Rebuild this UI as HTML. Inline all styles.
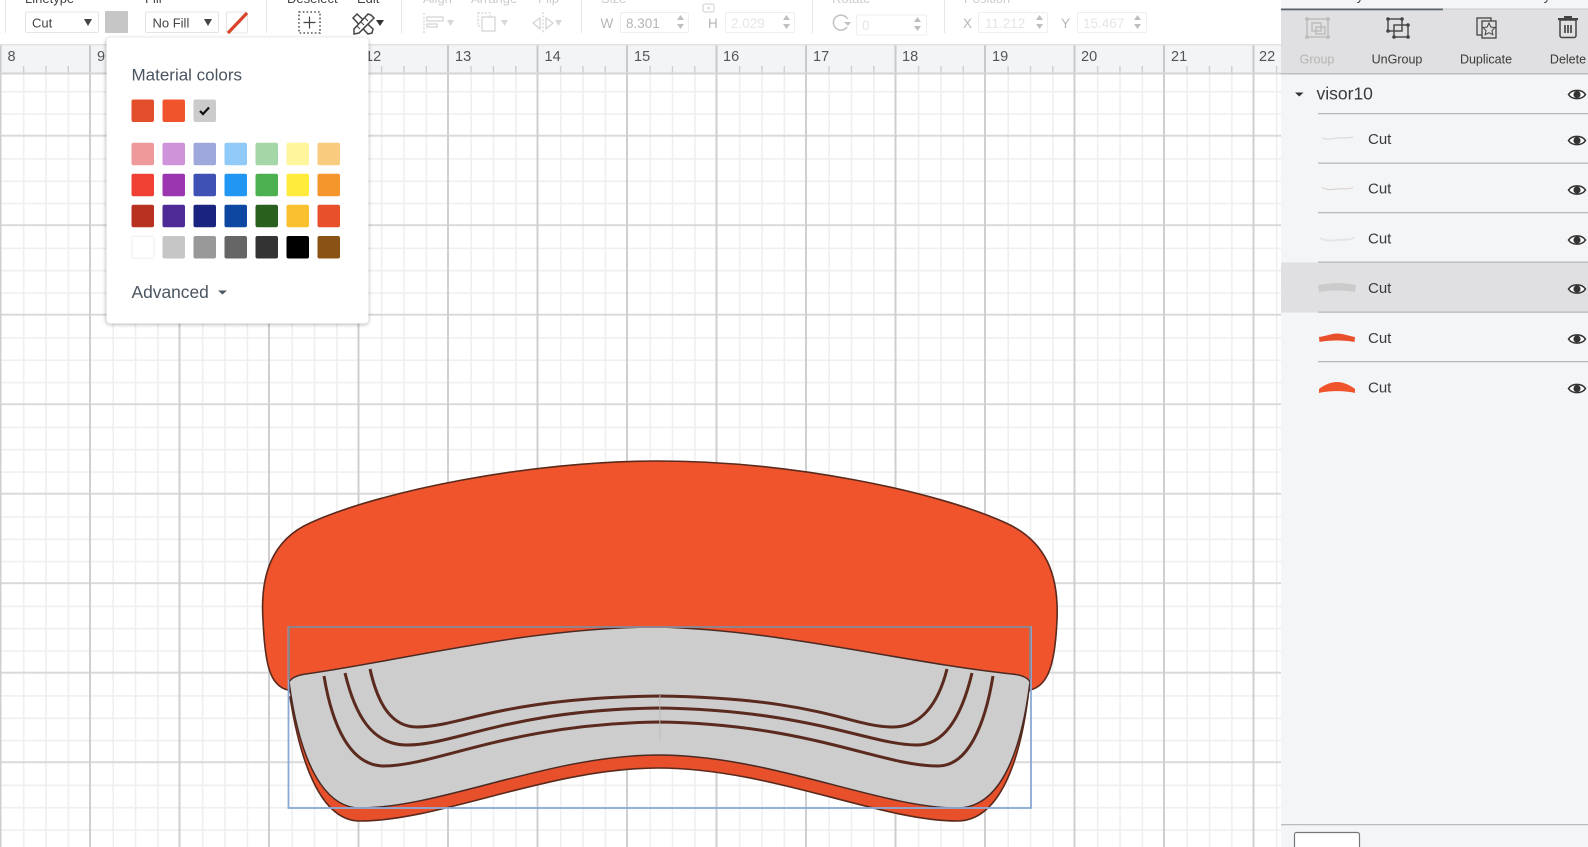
<!DOCTYPE html>
<html><head><meta charset="utf-8"><style>
html,body{margin:0;padding:0;background:#fff;width:1588px;height:847px;overflow:hidden}
svg{display:block;font-family:"Liberation Sans",sans-serif}
</style></head><body>
<svg width="1588" height="847" viewBox="0 0 1588 847" xmlns="http://www.w3.org/2000/svg">
<defs>
<pattern id="g" patternUnits="userSpaceOnUse" x="-0.5" y="45.2" width="89.5" height="89.5">
<rect x="23.4" y="0" width="1.6" height="89.5" fill="#efefef"/><rect x="45.75" y="0" width="1.6" height="89.5" fill="#efefef"/><rect x="68.1" y="0" width="1.6" height="89.5" fill="#efefef"/>
<rect x="0" y="23.4" width="89.5" height="1.6" fill="#efefef"/><rect x="0" y="45.75" width="89.5" height="1.6" fill="#efefef"/><rect x="0" y="68.1" width="89.5" height="1.6" fill="#efefef"/>
<rect x="0" y="0" width="89.5" height="2" fill="#dadada"/>
<rect x="0" y="0" width="2" height="89.5" fill="#cfcfcf"/>
</pattern>
<pattern id="t" patternUnits="userSpaceOnUse" x="-0.5" y="44" width="89.5" height="30">
<rect x="23.4" y="22" width="1.4" height="8" fill="#cfcfcf"/><rect x="45.75" y="22" width="1.4" height="8" fill="#cfcfcf"/><rect x="68.1" y="22" width="1.4" height="8" fill="#cfcfcf"/>
<rect x="0" y="0" width="2" height="30" fill="#c9c9c9"/>
</pattern>
<g id="eye"><path d="M-8.5 0C-5 -5.5 5 -5.5 8.5 0C5 5.5 -5 5.5 -8.5 0Z" fill="#fff" stroke="#333" stroke-width="1.6"/><circle r="3.6" fill="#333"/></g>
</defs>

<!-- canvas grid -->
<rect x="0" y="73" width="1282" height="774" fill="url(#g)"/>
<!-- ruler -->
<rect x="0" y="44" width="1282" height="30" fill="#f3f4f6"/>
<rect x="0" y="44" width="1282" height="30" fill="url(#t)"/>
<rect x="0" y="44" width="1282" height="1.5" fill="#e2e2e4"/>
<rect x="0" y="72.5" width="1282" height="2" fill="#d5d5d7"/>
<g font-size="14.5" fill="#555">
<text x="7.5" y="61">8</text><text x="97" y="61">9</text><text x="365" y="61">12</text><text x="455" y="61">13</text><text x="544.500" y="61">14</text><text x="634" y="61">15</text><text x="723" y="61">16</text><text x="813" y="61">17</text><text x="902" y="61">18</text><text x="992" y="61">19</text><text x="1081" y="61">20</text><text x="1171" y="61">21</text><text x="1259" y="61">22</text>
</g>

<!-- visor -->
<path d="M288 690C270 686 265 665 263 620C260 575 272 540 310 523C380 491 530 461 658 461C790 461 936 491 1006 523C1046 541 1059 575 1057 620C1055 665 1048 686 1030 690L1000 720L320 720Z" fill="#f0542d" stroke="#5a2a1c" stroke-width="1.6"/>
<path d="M290 697C300 760 320 821 360 821C440 821 550 768 658 768C770 768 880 821 957 821C1000 821 1020 760 1028 697Z" fill="#e8502c" stroke="#5a2a1c" stroke-width="1.6"/>
<path d="M289 682C292 677 298 675 306 674C400 661 530 627 658 627C780 630 900 662 1012 674C1022 675 1028 678 1030 682C1017 785 985 808 957 808C880 808 770 755 658 755C550 755 440 808 360 808C335 808 303 785 289 682Z" fill="#cdcdcd" stroke="#4a2a22" stroke-width="1.5"/>
<g fill="none" stroke="#5b2a1e" stroke-width="3" stroke-linecap="butt">
<path d="M370 669C378 705 392 727 417 727C460 727 500 698 658 696C820 698 850 727 893 727C920 727 938 705 947 669"/>
<path d="M345 673C355 715 372 745 407 745C455 745 510 710 658 708C810 710 870 745 917 745C945 745 962 715 972 673"/>
<path d="M324 676C332 725 350 766 384 766C435 766 510 724 658 722C810 724 880 766 938 766C968 766 985 725 993 676"/>
</g>
<rect x="659" y="695" width="1.5" height="46" fill="#b9b9b9" opacity=".6"/>
<!-- selection -->
<rect x="288.500" y="627" width="742.500" height="181" fill="none" stroke="#8aa9d6" stroke-width="1.8"/>
<path d="M289 680V627H1030V680" fill="none" stroke="#8d8289" stroke-width="1.8"/>

<!-- toolbar -->
<rect x="0" y="0" width="1282" height="44" fill="#fff"/>
<g font-size="13" fill="#444">
<text x="25" y="3">Linetype</text><text x="145" y="3">Fill</text><text x="287" y="3">Deselect</text><text x="357" y="3">Edit</text>
</g>
<g font-size="13" fill="#ccc">
<text x="423" y="3">Align</text><text x="471" y="3">Arrange</text><text x="538" y="3">Flip</text><text x="601" y="3">Size</text><text x="832" y="3">Rotate</text><text x="964" y="3">Position</text>
</g>
<g fill="#e6e6e6">
<rect x="5" y="0" width="1" height="33"/><rect x="266" y="0" width="1" height="33"/><rect x="401" y="0" width="1" height="33"/><rect x="581" y="0" width="1" height="33"/><rect x="812" y="0" width="1" height="33"/><rect x="944" y="0" width="1" height="33"/>
</g>
<rect x="25.500" y="12" width="73" height="20.500" rx="1.5" fill="#fff" stroke="#e4e4e4"/>
<text x="32" y="27.500" font-size="13" fill="#444">Cut</text>
<path d="M84 19h8l-4 7z" fill="#444"/>
<rect x="105" y="11" width="23" height="22" rx="1" fill="#c6c6c6"/>
<rect x="145.500" y="12" width="73" height="20.500" rx="1.5" fill="#fff" stroke="#e4e4e4"/>
<text x="152.500" y="27.500" font-size="13" fill="#444">No Fill</text>
<path d="M204 19h8l-4 7z" fill="#444"/>
<rect x="226.500" y="12" width="21" height="21" rx="1.5" fill="#fff" stroke="#e4e4e4"/>
<path d="M228 33L247 13" stroke="#d9432b" stroke-width="3.2"/>
<!-- deselect -->
<rect x="299" y="12" width="21" height="21" fill="none" stroke="#555" stroke-width="1.6" stroke-dasharray="1.6 2.2"/>
<path d="M309.500 16.500v12M303.500 22.500h12" stroke="#444" stroke-width="1.2"/>
<!-- edit -->
<g fill="#fff" stroke="#444" stroke-width="1.5">
<path d="M353 18l4-4 16 15-1 4-4 1z"/><path d="M354 29l14-15 3 1 3 3-15 15-5 1z"/>
<path d="M357 26l3 3M361 22l3 3M365 18l3 3" stroke-width="1"/>
</g>
<path d="M376 20h8l-4 6z" fill="#333"/>
<!-- disabled -->
<g fill="none" stroke="#d5d5d5" stroke-width="1.3">
<path d="M424 13v21" stroke-dasharray="2 1.6"/><rect x="427" y="17" width="16" height="4"/><rect x="427" y="24" width="10" height="3"/>
<rect x="478" y="13" width="12" height="13" stroke-dasharray="2 1.5"/><rect x="482" y="17" width="13" height="14" fill="#fff"/>
<path d="M543 12v22" stroke-dasharray="2 1.6"/><path d="M540 18l-7 5 7 6zM546 18l7 5-7 6z"/>
</g>
<path d="M447 20h7l-3.500 6zM501 20h7l-3.500 6zM555 20h7l-3.500 6z" fill="#d8d8d8"/>
<!-- lock -->
<rect x="703" y="4" width="11" height="8" rx="2" fill="none" stroke="#d8d8d8" stroke-width="1.300"/><circle cx="708.500" cy="8" r="1.300" fill="#d8d8d8"/>
<g fill="#fff" stroke="#efefef">
<rect x="620.500" y="12.500" width="68" height="20" rx="1.500"/><rect x="725.500" y="12.500" width="69" height="20" rx="1.500"/><rect x="856.500" y="15" width="70" height="20" rx="1.500"/><rect x="978.500" y="12.500" width="69" height="20" rx="1.500"/><rect x="1077.500" y="12.500" width="69" height="20" rx="1.500"/>
</g>
<g font-size="13.500" fill="#b5b5b5">
<text x="600.500" y="28">W</text><text x="708" y="28">H</text><text x="963" y="28">X</text><text x="1061" y="28">Y</text><text x="626" y="28">8.301</text>
</g>
<g font-size="13.500" fill="#e6e6e6">
<text x="731" y="28">2.029</text><text x="862" y="30">0</text><text x="985" y="28">11.212</text><text x="1083" y="28">15.467</text>
</g>
<g fill="#bfbfbf">
<path d="M677 20l3.500-5 3.500 5zM677 24l3.500 5 3.500-5z"/><path d="M783 20l3.500-5 3.500 5zM783 24l3.500 5 3.500-5z"/><path d="M914 22l3.500-5 3.500 5zM914 26l3.500 5 3.500-5z"/><path d="M1036 20l3.500-5 3.500 5zM1036 24l3.500 5 3.500-5z"/><path d="M1134 20l3.500-5 3.500 5zM1134 24l3.500 5 3.500-5z"/>
</g>
<path d="M847 27a7.500 7.500 0 1 1 .5-8" fill="none" stroke="#c2c2c2" stroke-width="1.500"/><path d="M844 22h7l-3 4z" fill="#c2c2c2"/>

<!-- side panel -->
<rect x="1281" y="0" width="307" height="847" fill="#f4f5f7"/>
<rect x="1281" y="9" width="307" height="64.500" fill="#e0e0e2"/>
<rect x="1281" y="73" width="307" height="1.500" fill="#bdbdbd"/>
<rect x="1281" y="8.500" width="162" height="1.800" fill="#58636e"/>
<rect x="1443" y="8.500" width="145" height="1" fill="#c9c9c9"/>
<text x="1341" y="0" font-size="14" fill="#444">Layers</text><text x="1497" y="0" font-size="14" fill="#444">Color Sync</text>

<!-- group icon -->
<g fill="none" stroke="#bdbdbd" stroke-width="1.500">
<rect x="1307" y="19" width="21" height="18"/><rect x="1312" y="23" width="9" height="8"/><rect x="1316" y="27" width="9" height="7"/>
<g fill="#bdbdbd" stroke="none"><circle cx="1307" cy="19" r="2"/><circle cx="1328" cy="19" r="2"/><circle cx="1307" cy="37" r="2"/><circle cx="1328" cy="37" r="2"/></g>
</g>
<!-- ungroup icon -->
<g fill="none" stroke="#444" stroke-width="1.400">
<rect x="1388" y="19" width="14" height="12"/><rect x="1394" y="25" width="14" height="12"/>
<g fill="#444" stroke="none"><circle cx="1388" cy="19" r="1.800"/><circle cx="1402" cy="19" r="1.800"/><circle cx="1388" cy="31" r="1.800"/><circle cx="1408" cy="25" r="1.800"/><circle cx="1394" cy="37" r="1.800"/><circle cx="1408" cy="37" r="1.800"/></g>
</g>
<!-- duplicate icon -->
<g fill="none" stroke="#444" stroke-width="1.300">
<rect x="1477" y="18" width="14" height="17"/><rect x="1482" y="21" width="14" height="17" fill="#e0e0e2"/>
<path d="M1489 23l1.800 4 4.200.5-3 3 .8 4.200-3.800-2-3.800 2 .8-4.200-3-3 4.200-.5z" stroke-width="1"/>
</g>
<!-- delete icon -->
<g>
<rect x="1558" y="18" width="20" height="2.200" fill="#444"/><rect x="1564" y="16" width="8" height="2" fill="#444"/>
<path d="M1560 20h16v15.500a2 2 0 0 1-2 2h-12a2 2 0 0 1-2-2z" fill="none" stroke="#444" stroke-width="1.500"/>
<path d="M1565 25v8M1568 25v8M1571 25v8" stroke="#333" stroke-width="1.500"/>
</g>
<g font-size="12.500" text-anchor="middle">
<text x="1317" y="63.500" fill="#b5b5b5">Group</text><text x="1397" y="63.500" fill="#3a3a3a">UnGroup</text><text x="1486" y="63.500" fill="#3a3a3a">Duplicate</text><text x="1568" y="63.500" fill="#3a3a3a">Delete</text>
</g>

<path d="M1295 92.500h8.500l-4.250 4z" fill="#333"/>
<text x="1316.500" y="99.500" font-size="17.500" fill="#3a3a3a">visor10</text>

<rect x="1281" y="262.500" width="307" height="50" fill="#e0e0e2"/>
<g fill="#b9b9bb">
<rect x="1318" y="113" width="270" height="1.300"/><rect x="1318" y="162.500" width="270" height="1.300"/><rect x="1318" y="212" width="270" height="1.300"/><rect x="1318" y="261.500" width="270" height="1.300"/><rect x="1318" y="311.500" width="270" height="1.300"/><rect x="1318" y="361" width="270" height="1.300"/>
</g>
<g font-size="15" fill="#3a3a3a">
<text x="1368" y="144">Cut</text><text x="1368" y="193.500">Cut</text><text x="1368" y="243.500">Cut</text><text x="1368" y="293">Cut</text><text x="1368" y="343">Cut</text><text x="1368" y="392.500">Cut</text>
</g>
<use href="#eye" x="1577" y="94.500"/><use href="#eye" x="1577" y="140.500"/><use href="#eye" x="1577" y="190"/><use href="#eye" x="1577" y="240"/><use href="#eye" x="1577" y="289"/><use href="#eye" x="1577" y="339"/><use href="#eye" x="1577" y="388.500"/>
<!-- thumbs -->
<g fill="none">
<path d="M1322 138c6 2 10 1 15 0s10 1 16-1" stroke="#dcdcdc" stroke-width="1.200"/>
<path d="M1322 187c3 3 8 3 15 2s13 1 16-2" stroke="#dcd4d2" stroke-width="1.200"/>
<path d="M1320 238c4 3 10 3 17 2s15 1 17-3" stroke="#e4e4e4" stroke-width="1.800"/>
</g>
<path d="M1318 285C1326 284 1332 283 1337 283C1344 283 1350 284 1356 285L1355 292C1345 290 1329 290 1319 292Z" fill="#cbcbcb"/>
<path d="M1319 337C1326 336 1332 333.500 1337 333.500C1343 333.500 1349 336 1355 337L1354.500 342C1345 340 1329 340 1319.500 342Z" fill="#e8502c"/>
<path d="M1319 389C1324 385 1331 382 1337 382C1343 382 1350 385 1355 389L1355 393C1345 390.500 1329 390.500 1319 393Z" fill="#f0542d"/>
<!-- bottom -->
<rect x="1281" y="824" width="307" height="1.300" fill="#bcbcbc"/>
<rect x="1294.500" y="832.500" width="65" height="24" rx="2" fill="#fff" stroke="#777" stroke-width="1.200"/>

<!-- popup -->
<rect x="106" y="37.500" width="262.500" height="286" rx="4" fill="#000" opacity=".3" transform="translate(0 1)" style="filter:blur(2px)"/>
<rect x="106.500" y="37.500" width="262" height="286" rx="4" fill="#fff"/>
<text x="131.500" y="80.500" font-size="17" fill="#4a5560">Material colors</text>
<g>
<rect x="131.500" y="99.500" width="22.500" height="22.500" rx="2" fill="#e34f2a"/>
<rect x="162.500" y="99.500" width="22.500" height="22.500" rx="2" fill="#f0542d"/>
<rect x="193.500" y="99.500" width="22.500" height="22.500" rx="2" fill="#cbcbcb"/>
<path d="M200 111l3 3 6-6.500" fill="none" stroke="#111" stroke-width="2.200"/>
</g>
<g>
<rect x="131.500" y="142.700" width="22.500" height="22.500" rx="2" fill="#ef9a9a"/><rect x="162.500" y="142.700" width="22.500" height="22.500" rx="2" fill="#ce93d8"/><rect x="193.500" y="142.700" width="22.500" height="22.500" rx="2" fill="#9fa8da"/><rect x="224.500" y="142.700" width="22.500" height="22.500" rx="2" fill="#90caf9"/><rect x="255.500" y="142.700" width="22.500" height="22.500" rx="2" fill="#a5d6a7"/><rect x="286.500" y="142.700" width="22.500" height="22.500" rx="2" fill="#fff59d"/><rect x="317.500" y="142.700" width="22.500" height="22.500" rx="2" fill="#f8cb7f"/>
<rect x="131.500" y="173.700" width="22.500" height="22.500" rx="2" fill="#ef4033"/><rect x="162.500" y="173.700" width="22.500" height="22.500" rx="2" fill="#9c36b0"/><rect x="193.500" y="173.700" width="22.500" height="22.500" rx="2" fill="#3f51b5"/><rect x="224.500" y="173.700" width="22.500" height="22.500" rx="2" fill="#2196f3"/><rect x="255.500" y="173.700" width="22.500" height="22.500" rx="2" fill="#4caf50"/><rect x="286.500" y="173.700" width="22.500" height="22.500" rx="2" fill="#ffeb3b"/><rect x="317.500" y="173.700" width="22.500" height="22.500" rx="2" fill="#f5962d"/>
<rect x="131.500" y="204.700" width="22.500" height="22.500" rx="2" fill="#b93221"/><rect x="162.500" y="204.700" width="22.500" height="22.500" rx="2" fill="#4e2a96"/><rect x="193.500" y="204.700" width="22.500" height="22.500" rx="2" fill="#1a237e"/><rect x="224.500" y="204.700" width="22.500" height="22.500" rx="2" fill="#0d47a1"/><rect x="255.500" y="204.700" width="22.500" height="22.500" rx="2" fill="#2a601e"/><rect x="286.500" y="204.700" width="22.500" height="22.500" rx="2" fill="#fbc02d"/><rect x="317.500" y="204.700" width="22.500" height="22.500" rx="2" fill="#e8502c"/>
<rect x="132" y="236.200" width="22" height="22" rx="2" fill="#fff" stroke="#eee"/><rect x="162.500" y="236" width="22.500" height="22.500" rx="2" fill="#c6c6c6"/><rect x="193.500" y="236" width="22.500" height="22.500" rx="2" fill="#999"/><rect x="224.500" y="236" width="22.500" height="22.500" rx="2" fill="#666"/><rect x="255.500" y="236" width="22.500" height="22.500" rx="2" fill="#333"/><rect x="286.500" y="236" width="22.500" height="22.500" rx="2" fill="#000"/><rect x="317.500" y="236" width="22.500" height="22.500" rx="2" fill="#8b5216"/>
</g>
<text x="131.500" y="298" font-size="17.400" fill="#4a5560">Advanced</text>
<path d="M218 290.500h9l-4.500 4z" fill="#4a5560"/>
</svg>
</body></html>
